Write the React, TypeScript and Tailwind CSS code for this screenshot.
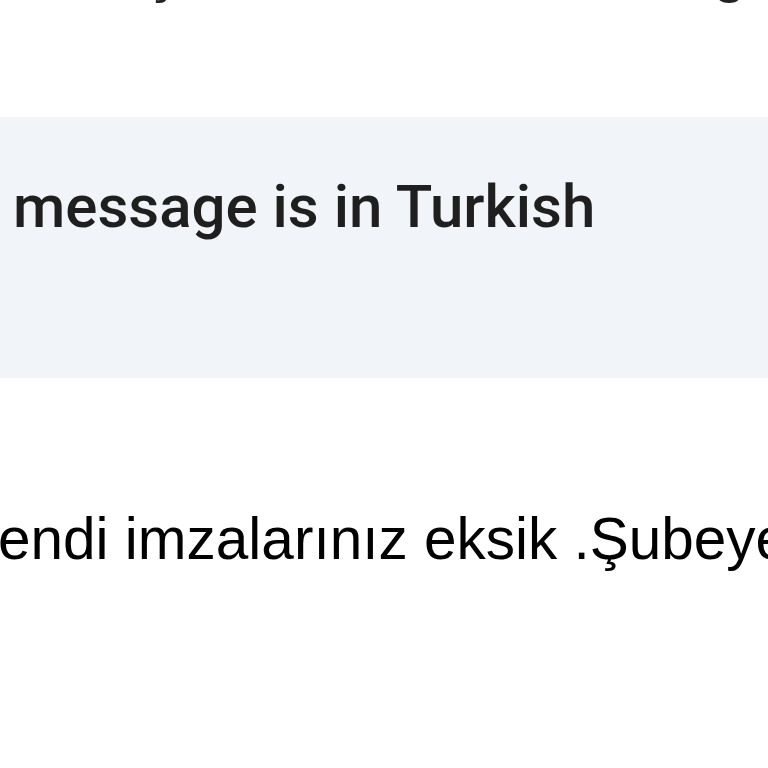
export default function App() {
  return (
    <main className="w-[768px] h-[768px] overflow-hidden bg-white text-[#1f1f1f]">
      {/* clipped line above, only descenders visible */}
      <div className="h-[117px]">
        <div className="h-[9px] overflow-hidden">
          <div className="-mt-[59px] flex font-['Liberation_Sans',Arial,sans-serif] text-[60px] leading-[60px] text-[#222]">
            <span className="ml-[146px]">ş</span>
            <span className="ml-auto mr-[22px]">g</span>
          </div>
        </div>
      </div>

      {/* language banner */}
      <div className="h-[261px] bg-[#f1f4f9] overflow-hidden">
        <p className="pt-[55px] whitespace-nowrap font-['Roboto',Inter,sans-serif] font-medium text-[60px] leading-[70px] text-[#1f1f1f] -ml-[118px]">
          This message is in Turkish
        </p>
      </div>

      {/* message body */}
      <div className="pt-[126px] overflow-hidden">
        <p className="whitespace-nowrap font-['Liberation_Sans',Arial,sans-serif] text-[58.5px] leading-[70px] text-black -ml-[2px]">
          endi imzalarınız eksik .Şubeye
        </p>
      </div>
    </main>
  );
}
